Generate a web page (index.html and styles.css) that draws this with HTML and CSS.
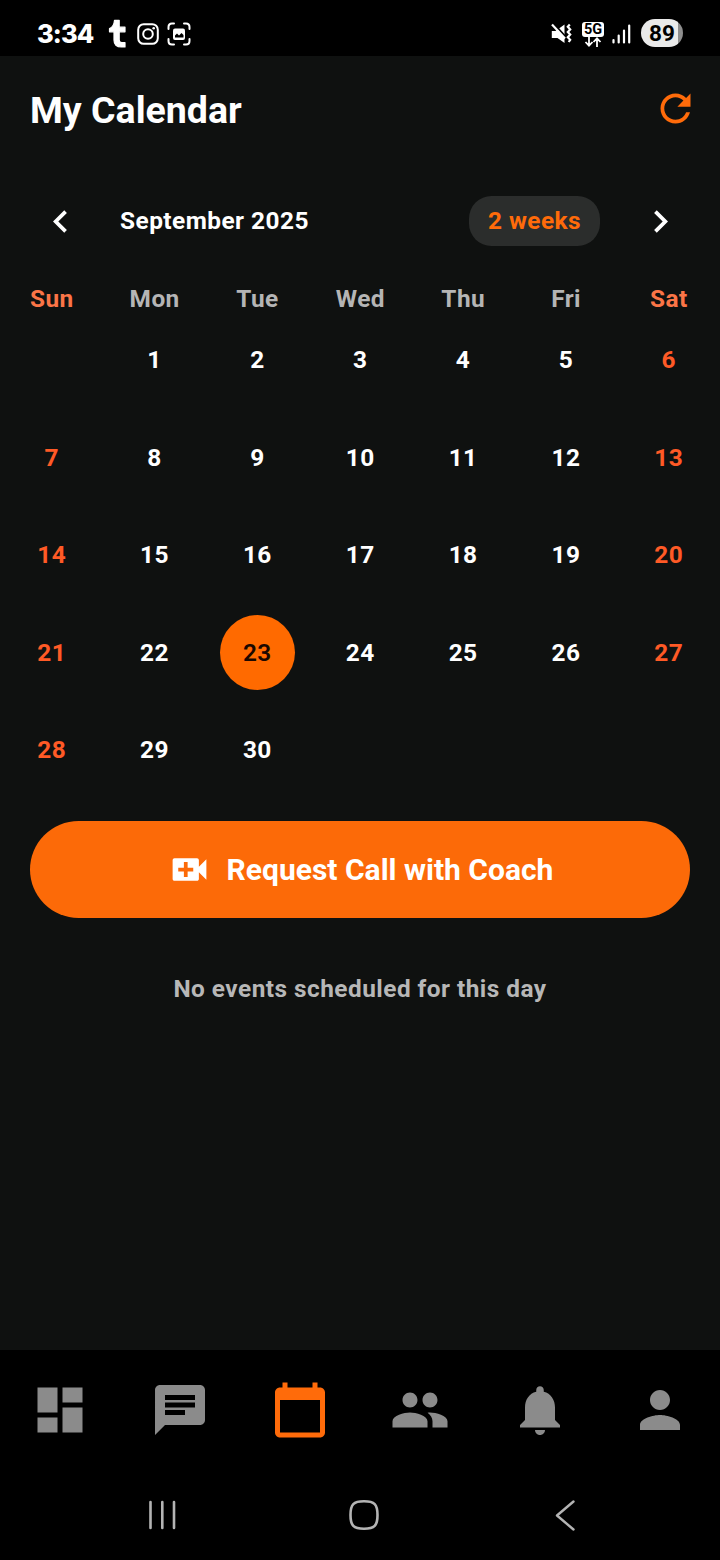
FILE: index.html
```html
<!DOCTYPE html>
<html lang="en">
<head>
<meta charset="utf-8">
<title>My Calendar</title>
<link rel="stylesheet" href="styles.css">
</head>
<body>
<div class="screen">
  <div class="status">
    <div class="status-left">
      <span class="clock">3:34</span>
      <svg class="ic-t" width="20" height="30" viewBox="0 0 20 30"><path d="M6.500 1.300h4.700v6.900h5.800v4.600h-5.800v8q0 2.900 2.600 2.900h3.200v4.300h-3.500q-7.500 0-7.500-7v-8.200H1.500V9.500Q6 8 6.500 1.300z" fill="#fff" stroke="#fff" stroke-width="1.200" stroke-linejoin="round"/></svg>
      <svg class="ic-insta" width="22" height="22" viewBox="0 0 22 22" fill="none" stroke="#fff" stroke-width="2"><rect x="1.200" y="1.200" width="19.600" height="19.600" rx="5.500"/><circle cx="11" cy="11" r="4.800"/><circle cx="16.700" cy="5.200" r="1.300" fill="#fff" stroke="none"/></svg>
      <svg class="ic-shot" width="24" height="24" viewBox="0 0 24 24"><path d="M1.500 7V5q0-3.500 3.500-3.500h2M17 1.500h2q3.500 0 3.500 3.500v2M22.500 17v2q0 3.500-3.500 3.500h-2M7 22.500H5q-3.500 0-3.500-3.500v-2" fill="none" stroke="#fff" stroke-width="2" stroke-linecap="round"/><rect x="6" y="6.500" width="12" height="11.500" rx="2" fill="#fff"/><path d="M8 15.500v-2l2-2 2 2 2.500-2.500 2 2v2.500z" fill="#000"/></svg>
    </div>
    <div class="status-right">
      <svg class="ic-mute" width="22" height="22" viewBox="0 0 22 22"><path d="M.800 8h3.700l9-6.500v18.500l-7-5h-5.700z" fill="#fff"/><path d="M2.500 .500l13 14.500" stroke="#000" stroke-width="2.200"/><path d="M1 1.500l13 14" stroke="#fff" stroke-width="2.200"/><path d="M18.800 1.500l-2 2.300 2.400 2.600-2.400 2.600 2.400 2.600-2.400 2.600 2.400 2.600-1.500 2.200" fill="none" stroke="#fff" stroke-width="2.200"/></svg>
      <div class="net"><span class="net-tag">5G</span><svg width="18" height="10" viewBox="0 0 18 10" fill="none" stroke="#fff" stroke-width="1.800"><path d="M5 0v8.500M1.500 5L5 8.700 8.500 5M13 10V1.500M9.500 5L13 1.300 16.500 5"/></svg></div>
      <svg class="ic-signal" width="19" height="20" viewBox="0 0 19 20" stroke="#fff" stroke-width="2.200" stroke-linecap="round"><path d="M1.500 16v2.500M6.700 11.500v7M12 6.500v12M17.200 1.500v17"/></svg>
      <span class="battery">89</span>
    </div>
  </div>

  <div class="page">
    <div class="titlebar">
      <h1 class="title">My Calendar</h1>
      <svg class="ic45 accent" viewBox="0 0 24 24"><path d="M17.650 6.350C16.200 4.900 14.210 4 12 4c-4.420 0-7.990 3.580-7.990 8s3.570 8 7.990 8c3.730 0 6.840-2.550 7.730-6h-2.080c-.82 2.330-3.040 4-5.650 4-3.310 0-6-2.690-6-6s2.690-6 6-6c1.660 0 3.140.69 4.220 1.780L13 11h7V4l-2.350 2.350z"/></svg>
    </div>

    <div class="month">
      <svg class="ic45 white" viewBox="0 0 24 24"><path d="M15.410 7.410L14 6l-6 6 6 6 1.410-1.410L10.830 12z"/></svg>
      <span class="month-name">September 2025</span>
      <span class="pill">2 weeks</span>
      <svg class="ic45 white" viewBox="0 0 24 24"><path d="M10 6L8.590 7.410 13.170 12l-4.580 4.590L10 18l6-6z"/></svg>
    </div>

    <div class="grid weekdays"><span class="we">Sun</span><span>Mon</span><span>Tue</span><span>Wed</span><span>Thu</span><span>Fri</span><span class="we">Sat</span></div>
    <div class="grid days">
      <span></span><span>1</span><span>2</span><span>3</span><span>4</span><span>5</span><span class="we">6</span>
      <span class="we">7</span><span>8</span><span>9</span><span>10</span><span>11</span><span>12</span><span class="we">13</span>
      <span class="we">14</span><span>15</span><span>16</span><span>17</span><span>18</span><span>19</span><span class="we">20</span>
      <span class="we">21</span><span>22</span><span><b class="selected">23</b></span><span>24</span><span>25</span><span>26</span><span class="we">27</span>
      <span class="we">28</span><span>29</span><span>30</span>
    </div>

    <div class="call">
      <svg class="ic45 white" viewBox="0 0 24 24"><path d="M17 10.500V7c0-.55-.45-1-1-1H4c-.55 0-1 .45-1 1v10c0 .55.45 1 1 1h12c.55 0 1-.45 1-1v-3.500l4 4v-11l-4 4zM14 13h-3v3H9v-3H6v-2h3V8h2v3h3v2z"/></svg>
      <span>Request Call with Coach</span>
    </div>
    <p class="empty">No events scheduled for this day</p>
  </div>

  <div class="tabs">
    <svg viewBox="0 0 24 24"><path d="M3 13h8V3H3v10zm0 8h8v-6H3v6zm10 0h8V11h-8v10zm0-18v6h8V3h-8z"/></svg>
    <svg viewBox="0 0 24 24"><path d="M20 2H4c-1.100 0-1.990.9-1.990 2L2 22l4-4h14c1.100 0 2-.9 2-2V4c0-1.100-.9-2-2-2zM6 9h12v2H6V9zm8 5H6v-2h8v2zm4-6H6V6h12v2z"/></svg>
    <svg class="accent" viewBox="0 0 24 24"><path d="M20 3h-1V1h-2v2H7V1H5v2H4c-1.100 0-2 .9-2 2v16c0 1.100.9 2 2 2h16c1.100 0 2-.9 2-2V5c0-1.100-.9-2-2-2zm0 18H4V8h16v13z"/></svg>
    <svg viewBox="0 0 24 24"><path d="M16 11c1.660 0 2.990-1.340 2.990-3S17.660 5 16 5s-3 1.340-3 3 1.340 3 3 3zm-8 0c1.660 0 2.990-1.340 2.990-3S9.660 5 8 5 5 6.340 5 8s1.340 3 3 3zm0 2c-2.330 0-7 1.170-7 3.500V19h14v-2.500c0-2.330-4.670-3.500-7-3.500zm8 0c-.29 0-.62.02-.97.05 1.160.84 1.970 1.970 1.970 3.450V19h6v-2.500c0-2.330-4.670-3.500-7-3.500z"/></svg>
    <svg viewBox="0 0 24 24"><path d="M12 22c1.100 0 2-.9 2-2h-4c0 1.100.89 2 2 2zm6-6v-5c0-3.070-1.640-5.640-4.500-6.320V4c0-.83-.67-1.500-1.500-1.500s-1.500.67-1.500 1.500v.68C7.630 5.360 6 7.920 6 11v5l-2 2v1h16v-1l-2-2z"/></svg>
    <svg viewBox="0 0 24 24"><path d="M12 12c2.210 0 4-1.790 4-4s-1.790-4-4-4-4 1.790-4 4 1.790 4 4 4zm0 2c-2.670 0-8 1.340-8 4v2h16v-2c0-2.660-5.330-4-8-4z"/></svg>
  </div>
  <div class="sysnav">
    <svg width="32" height="32" viewBox="0 0 32 32"><path d="M4.500 3v26M16.300 3v26M28 3v26" stroke-width="2.600"/></svg>
    <svg width="32" height="32" viewBox="0 0 32 32"><path d="M16 2.200c10.500 0 13.500 3 13.500 13.800S26.500 29.800 16 29.800 2.500 26.800 2.500 16 5.500 2.200 16 2.200z" stroke-width="2.600"/></svg>
    <svg width="32" height="32" viewBox="0 0 32 32"><path d="M24.500 2.500L8 16.500 24.500 30.500" stroke-width="2.400"/></svg>
  </div>
</div>
</body>
</html>
```
FILE: styles.css
```css
body { margin: 0; background: #000; font-family: Roboto, sans-serif; }
svg { display: block; flex: none; }
.screen { width: 720px; height: 1560px; display: flex; flex-direction: column; background: #000; color: #fff; overflow: hidden; }

.status { height: 56px; flex: none; box-sizing: border-box; padding: 12px 37px 0; display: flex; justify-content: space-between; }
.status-left, .status-right { display: flex; align-items: center; height: 44px; }
.clock { width: 70px; font: 800 25.500px/44px Inter, sans-serif; letter-spacing: -.9px; }
.ic-t { margin-left: 1px; }
.ic-insta { margin-left: 9px; }
.ic-shot { margin-left: 8px; }
.net { display: flex; flex-direction: column; align-items: center; margin-left: 9px; }
.net-tag { width: 22px; height: 15px; border-radius: 3px; background: #fff; color: #000; font: 700 14.500px/15px Roboto, sans-serif; text-align: center; }
.ic-signal { margin-left: 8px; }
.battery { margin-left: 10px; width: 42px; height: 28px; margin-top: -2px; border-radius: 14px; background: linear-gradient(90deg, #eaeaea 37px, #8e8e8e 37px); color: #000; font: 700 22.500px/28px Roboto, sans-serif; text-align: center; }

.page { flex: 1; background: #0f1110; }
.ic45 { width: 45px; height: 45px; }
.accent { fill: #ff6b0a; }
.white { fill: #fff; }
.titlebar { height: 105px; padding: 0 22.500px 0 30px; display: flex; align-items: center; justify-content: space-between; }
.title { margin: 3px 0 0; font-size: 37.500px; font-weight: 700; line-height: 44px; }
.month { height: 120px; padding: 0 37.500px; display: flex; align-items: center; font-size: 24.400px; font-weight: 700; letter-spacing: .47px; }
.month-name { flex: 1; margin: -1px 0 0 37.500px; }
.pill { box-sizing: border-box; width: 131px; height: 50px; margin-right: 37.500px; border-radius: 22.500px; background: #2b2d2c; color: #ff6b0a; line-height: 50px; text-align: center; }
.grid { display: grid; grid-template-columns: repeat(7, 1fr); text-align: center; font-size: 24.400px; font-weight: 700; letter-spacing: .47px; }
.weekdays { height: 30px; line-height: 36px; color: #b5b5b5; }
.weekdays span { padding-left: .8px; }
.weekdays .we { color: #fb7547; }
.days { grid-auto-rows: 97.500px; line-height: 97.500px; }
.days .we { color: #ff5a26; }
.days span { display: flex; align-items: center; justify-content: center; padding-left: .5px; }
.selected { width: 75px; line-height: 75px; border-radius: 50%; background: #ff6a00; color: #1a0800; text-align: center; font-weight: 600; }
.call { height: 97.500px; margin: 22px 30px 0; border-radius: 48.750px; background: #fc6a08; display: flex; align-items: center; justify-content: center; gap: 15px; font-size: 30px; font-weight: 700; }
.empty { margin: 56px 0 0; text-align: center; font-size: 24.400px; line-height: 29px; font-weight: 700; letter-spacing: .47px; color: #b7b7b7; }

.tabs { height: 120px; flex: none; display: grid; grid-template-columns: repeat(6, 1fr); place-items: center; }
.tabs svg { width: 60px; height: 60px; fill: #8b8b8b; }
.tabs .accent { fill: #ff6b0a; }
.sysnav { height: 90px; flex: none; box-sizing: border-box; padding: 0 139px 0 146px; display: flex; align-items: center; justify-content: space-between; }
.sysnav svg { fill: none; stroke: #b4b4b4; stroke-linecap: round; stroke-linejoin: round; }
```
